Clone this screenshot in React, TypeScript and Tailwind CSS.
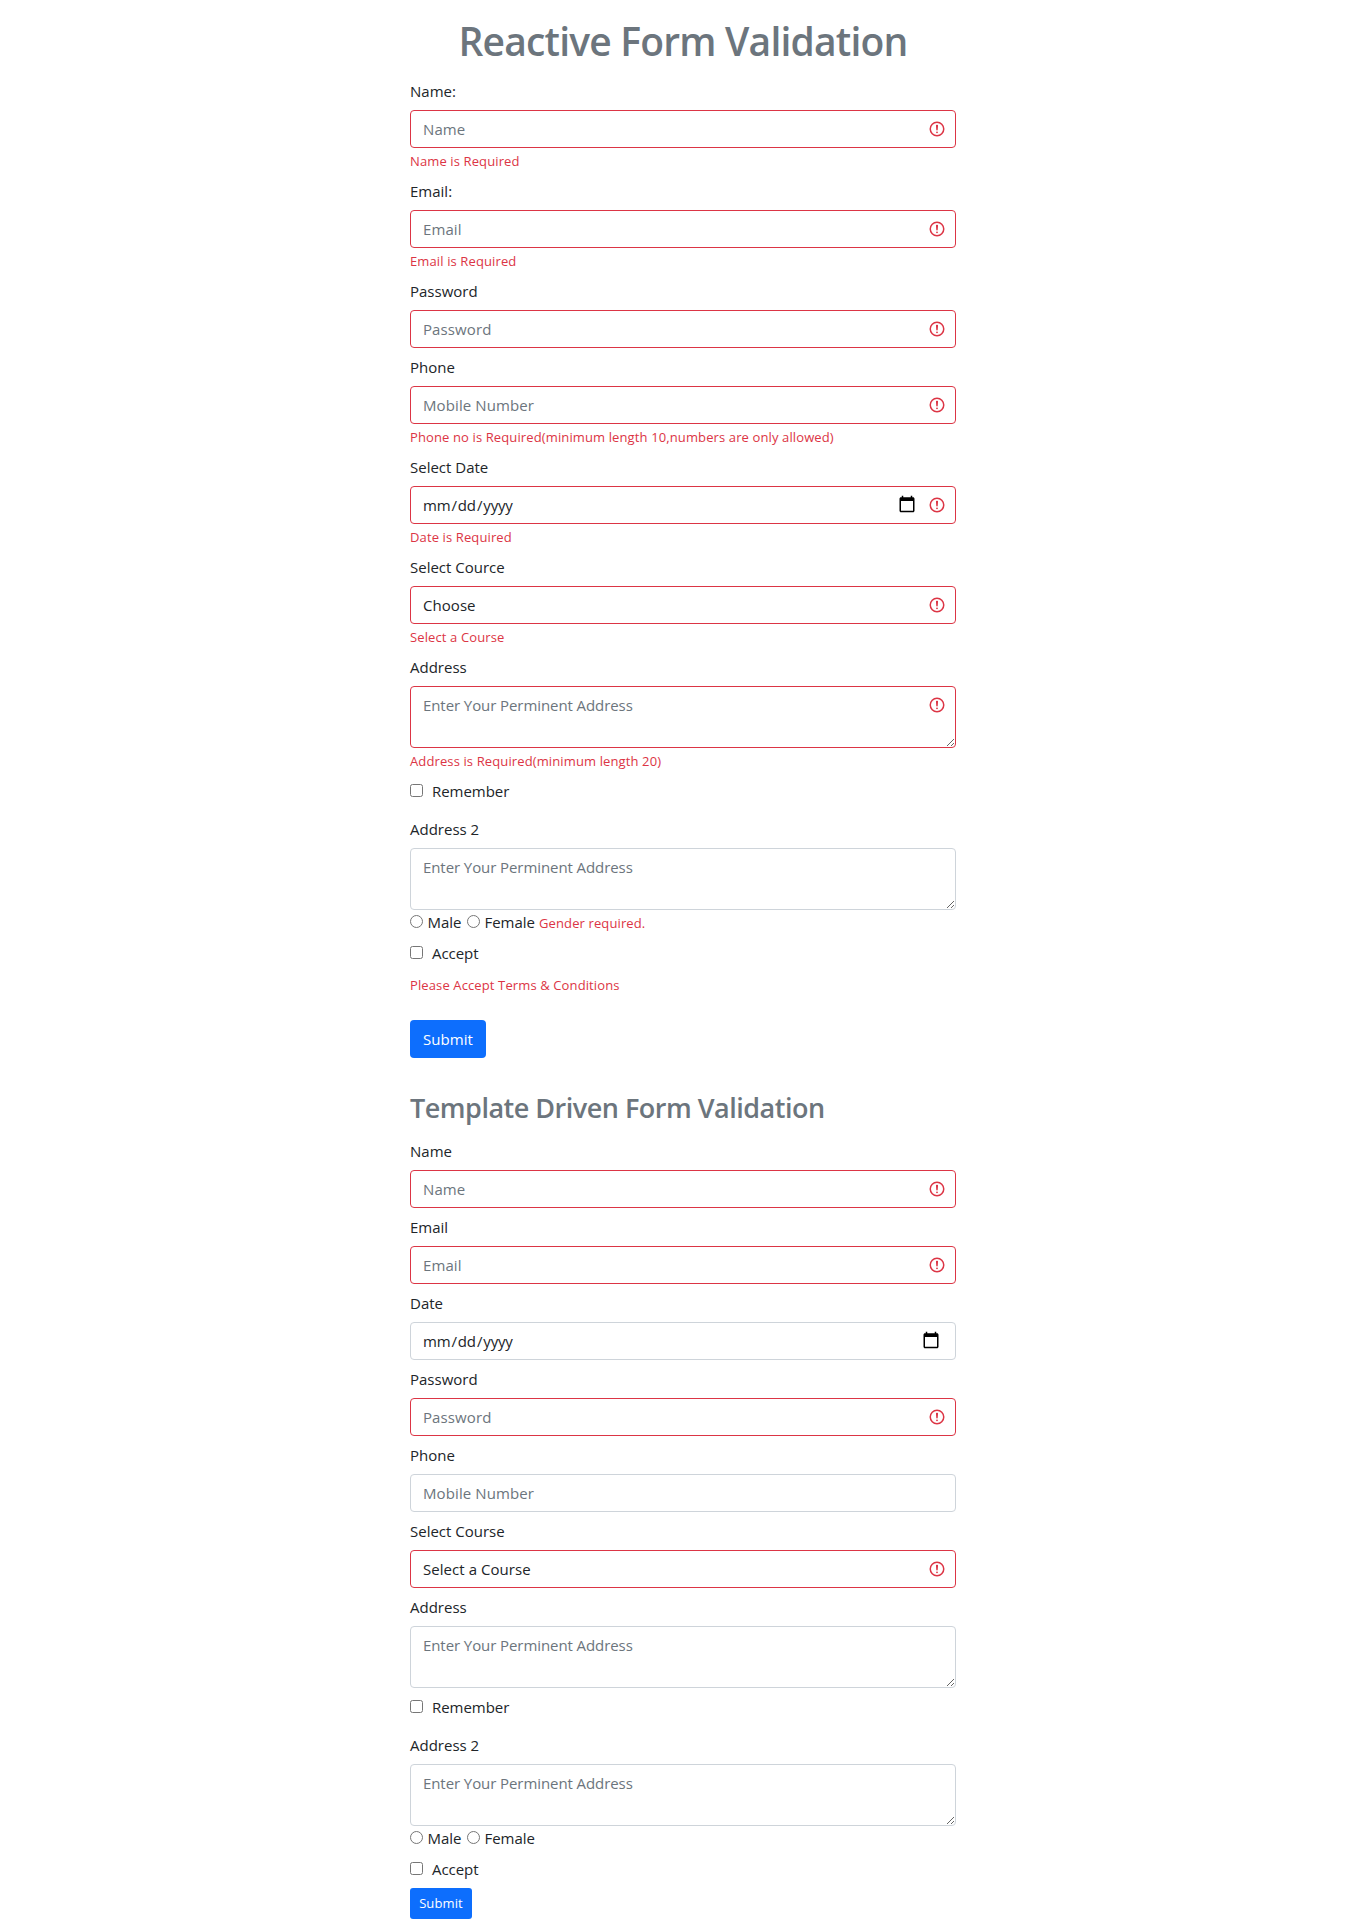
import React from "react";

function Alert() {
  return (
    <svg viewBox="0 0 12 12" width="18" height="18" fill="none" stroke="#dc3545" className="pointer-events-none absolute right-[10px] top-[10px]">
      <circle cx="6" cy="6" r="4.5" />
      <path strokeLinejoin="round" d="M5.8 3.6h.4L6 6.5z" />
      <circle cx="6" cy="8.2" r=".6" fill="#dc3545" stroke="none" />
    </svg>
  );
}

function Calendar({ invalid }: { invalid: boolean }) {
  return (
    <svg
      viewBox="0 0 24 24"
      width="18"
      height="18"
      fill="#000"
      className={`pointer-events-none absolute top-[9px] ${invalid ? "right-[40.5px]" : "right-[16.5px]"}`}
    >
      <path d="M20 3h-1V1h-2v2H7V1H5v2H4c-1.1 0-2 .9-2 2v16c0 1.1.9 2 2 2h16c1.1 0 2-.9 2-2V5c0-1.1-.9-2-2-2zm0 18H4V8h16v13z" />
    </svg>
  );
}

function ErrorText({ children }: { children: React.ReactNode }) {
  return <p className="h-6 pt-px text-[13px] leading-6 tracking-[0.12px] text-[#dc3545]">{children}</p>;
}

type FieldProps = {
  label: string;
  kind?: "text" | "password" | "date" | "select" | "area";
  hint?: string;
  invalid?: boolean;
  error?: string;
  last?: boolean;
};

const control =
  "block w-full rounded border bg-white py-[6px] pl-3 text-[15px] leading-6 text-[#212529] outline-none placeholder:text-[#6c757d] placeholder:opacity-100";

function Field({ label, kind = "text", hint = "", invalid = false, error, last = false }: FieldProps) {
  const tone = invalid ? "border-[#dc3545] pr-9" : "border-[#ced4da] pr-3";
  return (
    <div className={last ? "" : "mb-[6px]"}>
      <label className="mb-2 block h-6 pt-px leading-6">{label}</label>
      <div className="relative">
        {kind === "area" ? (
          <textarea placeholder={hint} className={`${control} ${tone} h-[62px] resize-y tracking-[-0.08px]`} />
        ) : kind === "select" ? (
          <select className={`${control} ${tone} h-[38px] appearance-none tracking-[0.05px]`}>
            <option>{hint}</option>
          </select>
        ) : kind === "date" ? (
          <>
            <input
              type="date"
              className={`${control} ${tone} h-[38px] -indent-px tracking-[-0.15px] [&::-webkit-calendar-picker-indicator]:opacity-0`}
            />
            <Calendar invalid={invalid} />
          </>
        ) : (
          <input type={kind} placeholder={hint} className={`${control} ${tone} h-[38px] tracking-[0.1px]`} />
        )}
        {invalid && <Alert />}
      </div>
      {error && <ErrorText>{error}</ErrorText>}
    </div>
  );
}

function Check({ label }: { label: string }) {
  return (
    <label className="flex h-6 leading-6 tracking-[-0.05px]">
      <input type="checkbox" className="mr-[9px] mt-[6px] size-[13px]" />
      <span className="pt-px">{label}</span>
    </label>
  );
}

function Gender({ error, name }: { error?: string; name: string }) {
  return (
    <div className="flex h-6 leading-6 tracking-[-0.05px]">
      <label className="flex w-[57px]">
        <input type="radio" name={name} className="mr-[4.5px] mt-[5px] size-[13px]" />
        Male
      </label>
      <label className="flex w-[72px]">
        <input type="radio" name={name} className="mr-[4.5px] mt-[5px] size-[13px]" />
        Female
      </label>
      {error && <ErrorText>{error}</ErrorText>}
    </div>
  );
}

export default function App() {
  return (
    <div className="min-h-[1919px] bg-white font-['Open_Sans',sans-serif] text-[15px] text-[#212529]">
      <main className="mx-auto w-[546px] pt-[17px]">
        <h1 className="mb-[13px] h-12 text-center text-[39px] font-semibold leading-[48px] tracking-[-0.8px] text-[#6c757d]">
          Reactive Form Validation
        </h1>
        <form>
          <Field label="Name:" hint="Name" invalid error="Name is Required" />
          <Field label="Email:" hint="Email" invalid error="Email is Required" />
          <Field label="Password" kind="password" hint="Password" invalid />
          <Field label="Phone" hint="Mobile Number" invalid error="Phone no is Required(minimum length 10,numbers are only allowed)" />
          <Field label="Select Date" kind="date" invalid error="Date is Required" />
          <Field label="Select Cource" kind="select" hint="Choose" invalid error="Select a Course" />
          <Field label="Address" kind="area" hint="Enter Your Perminent Address" invalid error="Address is Required(minimum length 20)" />
          <div className="mb-[14px]">
            <Check label="Remember" />
          </div>
          <Field label="Address 2" kind="area" hint="Enter Your Perminent Address" last />
          <Gender name="gender-a" error="Gender required." />
          <div className="mb-2 mt-[6px]">
            <Check label="Accept" />
          </div>
          <ErrorText>Please Accept Terms &amp; Conditions</ErrorText>
          <button type="button" className="mt-6 block h-[38px] w-[76px] rounded bg-[#0d6efd] tracking-[0.08px] text-white">
            Submit
          </button>
        </form>
        <h3 className="mb-[13px] mt-[33px] h-[34px] text-[27px] font-semibold leading-[34px] tracking-[-0.5px] text-[#6c757d]">
          Template Driven Form Validation
        </h3>
        <form>
          <Field label="Name" hint="Name" invalid />
          <Field label="Email" hint="Email" invalid />
          <Field label="Date" kind="date" />
          <Field label="Password" kind="password" hint="Password" invalid />
          <Field label="Phone" hint="Mobile Number" />
          <Field label="Select Course" kind="select" hint="Select a Course" invalid />
          <Field label="Address" kind="area" hint="Enter Your Perminent Address" />
          <div className="mb-[14px]">
            <Check label="Remember" />
          </div>
          <Field label="Address 2" kind="area" hint="Enter Your Perminent Address" last />
          <Gender name="gender-b" />
          <div className="mt-[6px]">
            <Check label="Accept" />
          </div>
          <button type="button" className="mt-2 block h-[31px] w-[62px] rounded-[3px] bg-[#0d6efd] pt-px text-[13px] tracking-[0.12px] text-white">
            Submit
          </button>
        </form>
      </main>
    </div>
  );
}
